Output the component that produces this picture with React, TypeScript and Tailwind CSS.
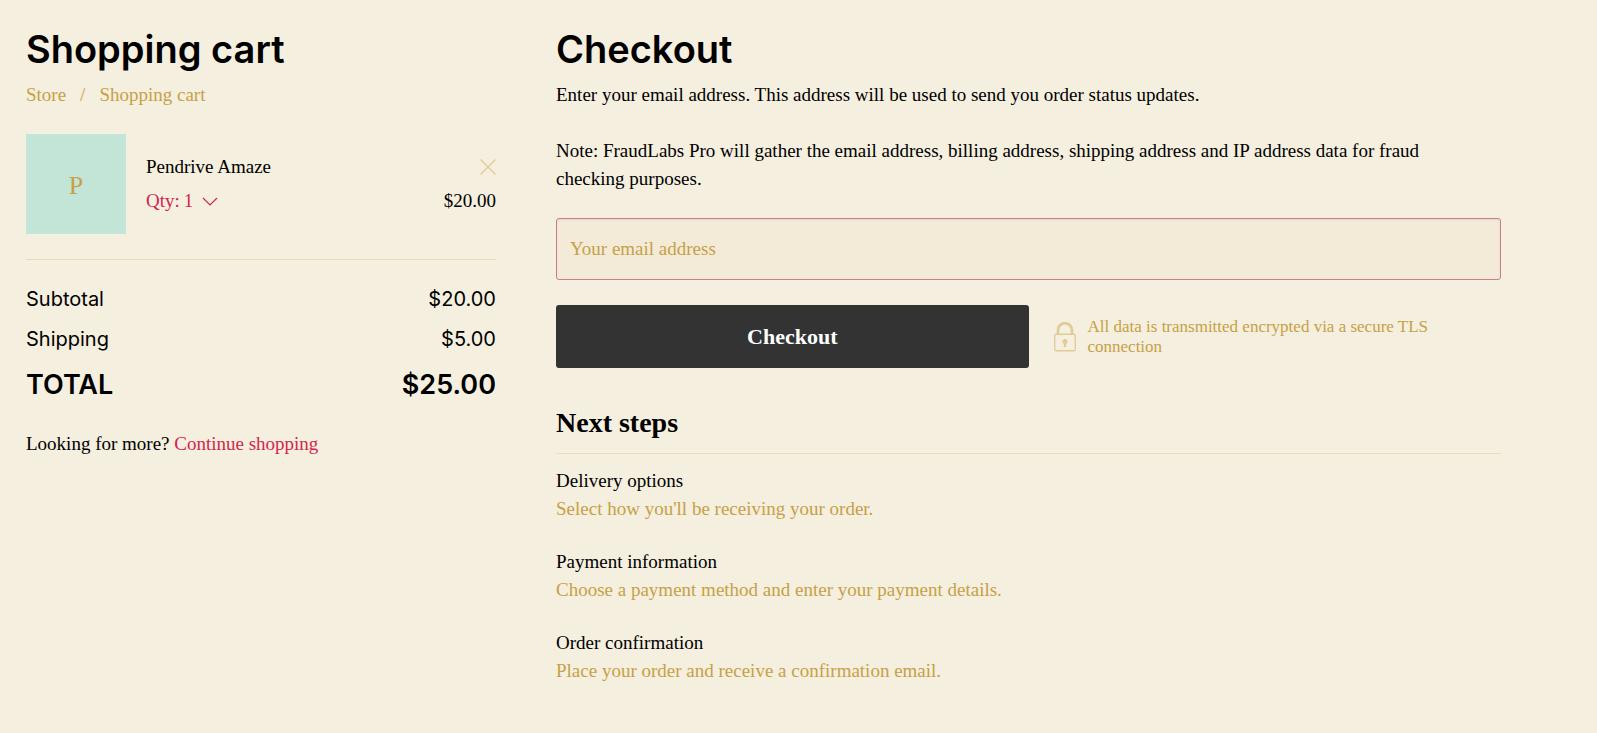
import { useState } from 'react'

const steps = [
  { title: 'Delivery options', text: "Select how you'll be receiving your order." },
  { title: 'Payment information', text: 'Choose a payment method and enter your payment details.' },
  { title: 'Order confirmation', text: 'Place your order and receive a confirmation email.' },
]

function LockIcon() {
  return (
    <svg width="22" height="30" viewBox="0 0 22 30" fill="none" className="shrink-0 text-[#e0cb96]" aria-hidden="true">
      <path d="M4 12V8.2a7 7 0 0 1 14 0V12" stroke="currentColor" strokeWidth="2.6" />
      <rect x="0.75" y="12.25" width="20.5" height="16.5" rx="1.5" stroke="currentColor" strokeWidth="1.3" />
      <path d="M11 17a2.5 2.5 0 0 0-1.4 4.6l.3 3.4h2.2l.3-3.4A2.5 2.5 0 0 0 11 17Z" fill="currentColor" />
    </svg>
  )
}

function QuantitySelect() {
  const [qty, setQty] = useState('1')

  return (
    <div className="flex items-center gap-2 text-[#d2254f]">
      <div className="flex items-center gap-1">
        <label htmlFor="qty">Qty:</label>
        <select
          id="qty"
          value={qty}
          onChange={(e) => setQty(e.target.value)}
          className="cursor-pointer appearance-none bg-transparent outline-none"
        >
          {['1', '2', '3', '4', '5'].map((n) => (
            <option key={n}>{n}</option>
          ))}
        </select>
      </div>
      <svg width="16" height="9" viewBox="0 0 16 9" fill="none" aria-hidden="true">
        <path d="M1 1l7 7 7-7" stroke="currentColor" strokeWidth="1.2" />
      </svg>
    </div>
  )
}

function Cart() {
  const [inCart, setInCart] = useState(true)

  return (
    <section>
      <h1 className="font-[Inter,sans-serif] text-[38px] leading-12 font-semibold">Shopping cart</h1>
      <nav className="mt-2 flex gap-3.5 text-[#c6a146]">
        <a href="#store">Store</a>
        <span>/</span>
        <a href="#cart">Shopping cart</a>
      </nav>

      {inCart && (
        <div className="mt-[25px] flex gap-5">
          <div className="flex size-25 shrink-0 items-center justify-center bg-[#c3e5d7] pt-1 text-[26px] text-[#c6a146]">P</div>
          <div className="flex grow flex-col justify-center gap-1.5">
            <div className="flex items-center justify-between">
              <span>Pendrive Amaze</span>
              <button type="button" aria-label="Remove" onClick={() => setInCart(false)} className="cursor-pointer text-[#e0cb96]">
                <svg width="16" height="16" viewBox="0 0 16 16" fill="none">
                  <path d="M.5.5l15 15M15.5.5l-15 15" stroke="currentColor" strokeWidth="1.2" />
                </svg>
              </button>
            </div>
            <div className="flex items-center justify-between">
              <QuantitySelect />
              <span>$20.00</span>
            </div>
          </div>
        </div>
      )}

      <dl className="mt-[25px] border-t border-[#e8dcb9] pt-[19px] font-[Inter,sans-serif] text-xl leading-10">
        <div className="flex justify-between">
          <dt>Subtotal</dt>
          <dd>$20.00</dd>
        </div>
        <div className="flex justify-between">
          <dt>Shipping</dt>
          <dd>$5.00</dd>
        </div>
        <div className="mt-1.5 flex justify-between text-[27px] leading-10 font-semibold">
          <dt>TOTAL</dt>
          <dd>$25.00</dd>
        </div>
      </dl>

      <p className="mt-[25px]">
        Looking for more?{' '}
        <a href="#store" className="text-[#d2254f]">
          Continue shopping
        </a>
      </p>
    </section>
  )
}

function Checkout() {
  return (
    <section>
      <h1 className="font-[Inter,sans-serif] text-[38px] leading-12 font-semibold">Checkout</h1>
      <p className="mt-2">Enter your email address. This address will be used to send you order status updates.</p>
      <p className="mt-7 pr-12">
        Note: FraudLabs Pro will gather the email address, billing address, shipping address and IP address data for fraud
        checking purposes.
      </p>

      <form onSubmit={(e) => e.preventDefault()}>
        <input
          type="email"
          aria-label="Your email address"
          placeholder="Your email address"
          className="mt-[25px] block h-[62px] w-full rounded-[3px] border border-[#cc7b93] bg-[#f3ebd8] px-[13px] shadow-[inset_0_1px_2px_rgba(0,0,0,0.08)] outline-none placeholder:text-[#c6a146]"
        />
        <div className="mt-[25px] grid grid-cols-2 items-center">
          <button type="submit" className="h-[63px] cursor-pointer rounded-[3px] bg-[#333333] text-[22px] font-bold text-white">
            Checkout
          </button>
          <div className="flex items-center gap-3 pr-16 pl-[25px] text-[17px] leading-5 text-[#c6a146]">
            <LockIcon />
            <span>All data is transmitted encrypted via a secure TLS connection</span>
          </div>
        </div>
      </form>

      <h2 className="mt-[37px] border-b border-[#e8dcb9] pb-3 text-[28px] leading-9 font-bold">Next steps</h2>
      <ol className="mt-[13px] flex flex-col gap-[25px]">
        {steps.map((step) => (
          <li key={step.title}>
            <h3>{step.title}</h3>
            <p className="text-[#c6a146]">{step.text}</p>
          </li>
        ))}
      </ol>
    </section>
  )
}

export default function App() {
  return (
    <main className="grid min-h-screen grid-cols-[94fr_189fr] gap-[60px] bg-[#f5efdf] py-[25px] pr-24 pl-[26px] font-['Liberation_Serif',serif] text-[19px] leading-7 text-black">
      <Cart />
      <Checkout />
    </main>
  )
}
